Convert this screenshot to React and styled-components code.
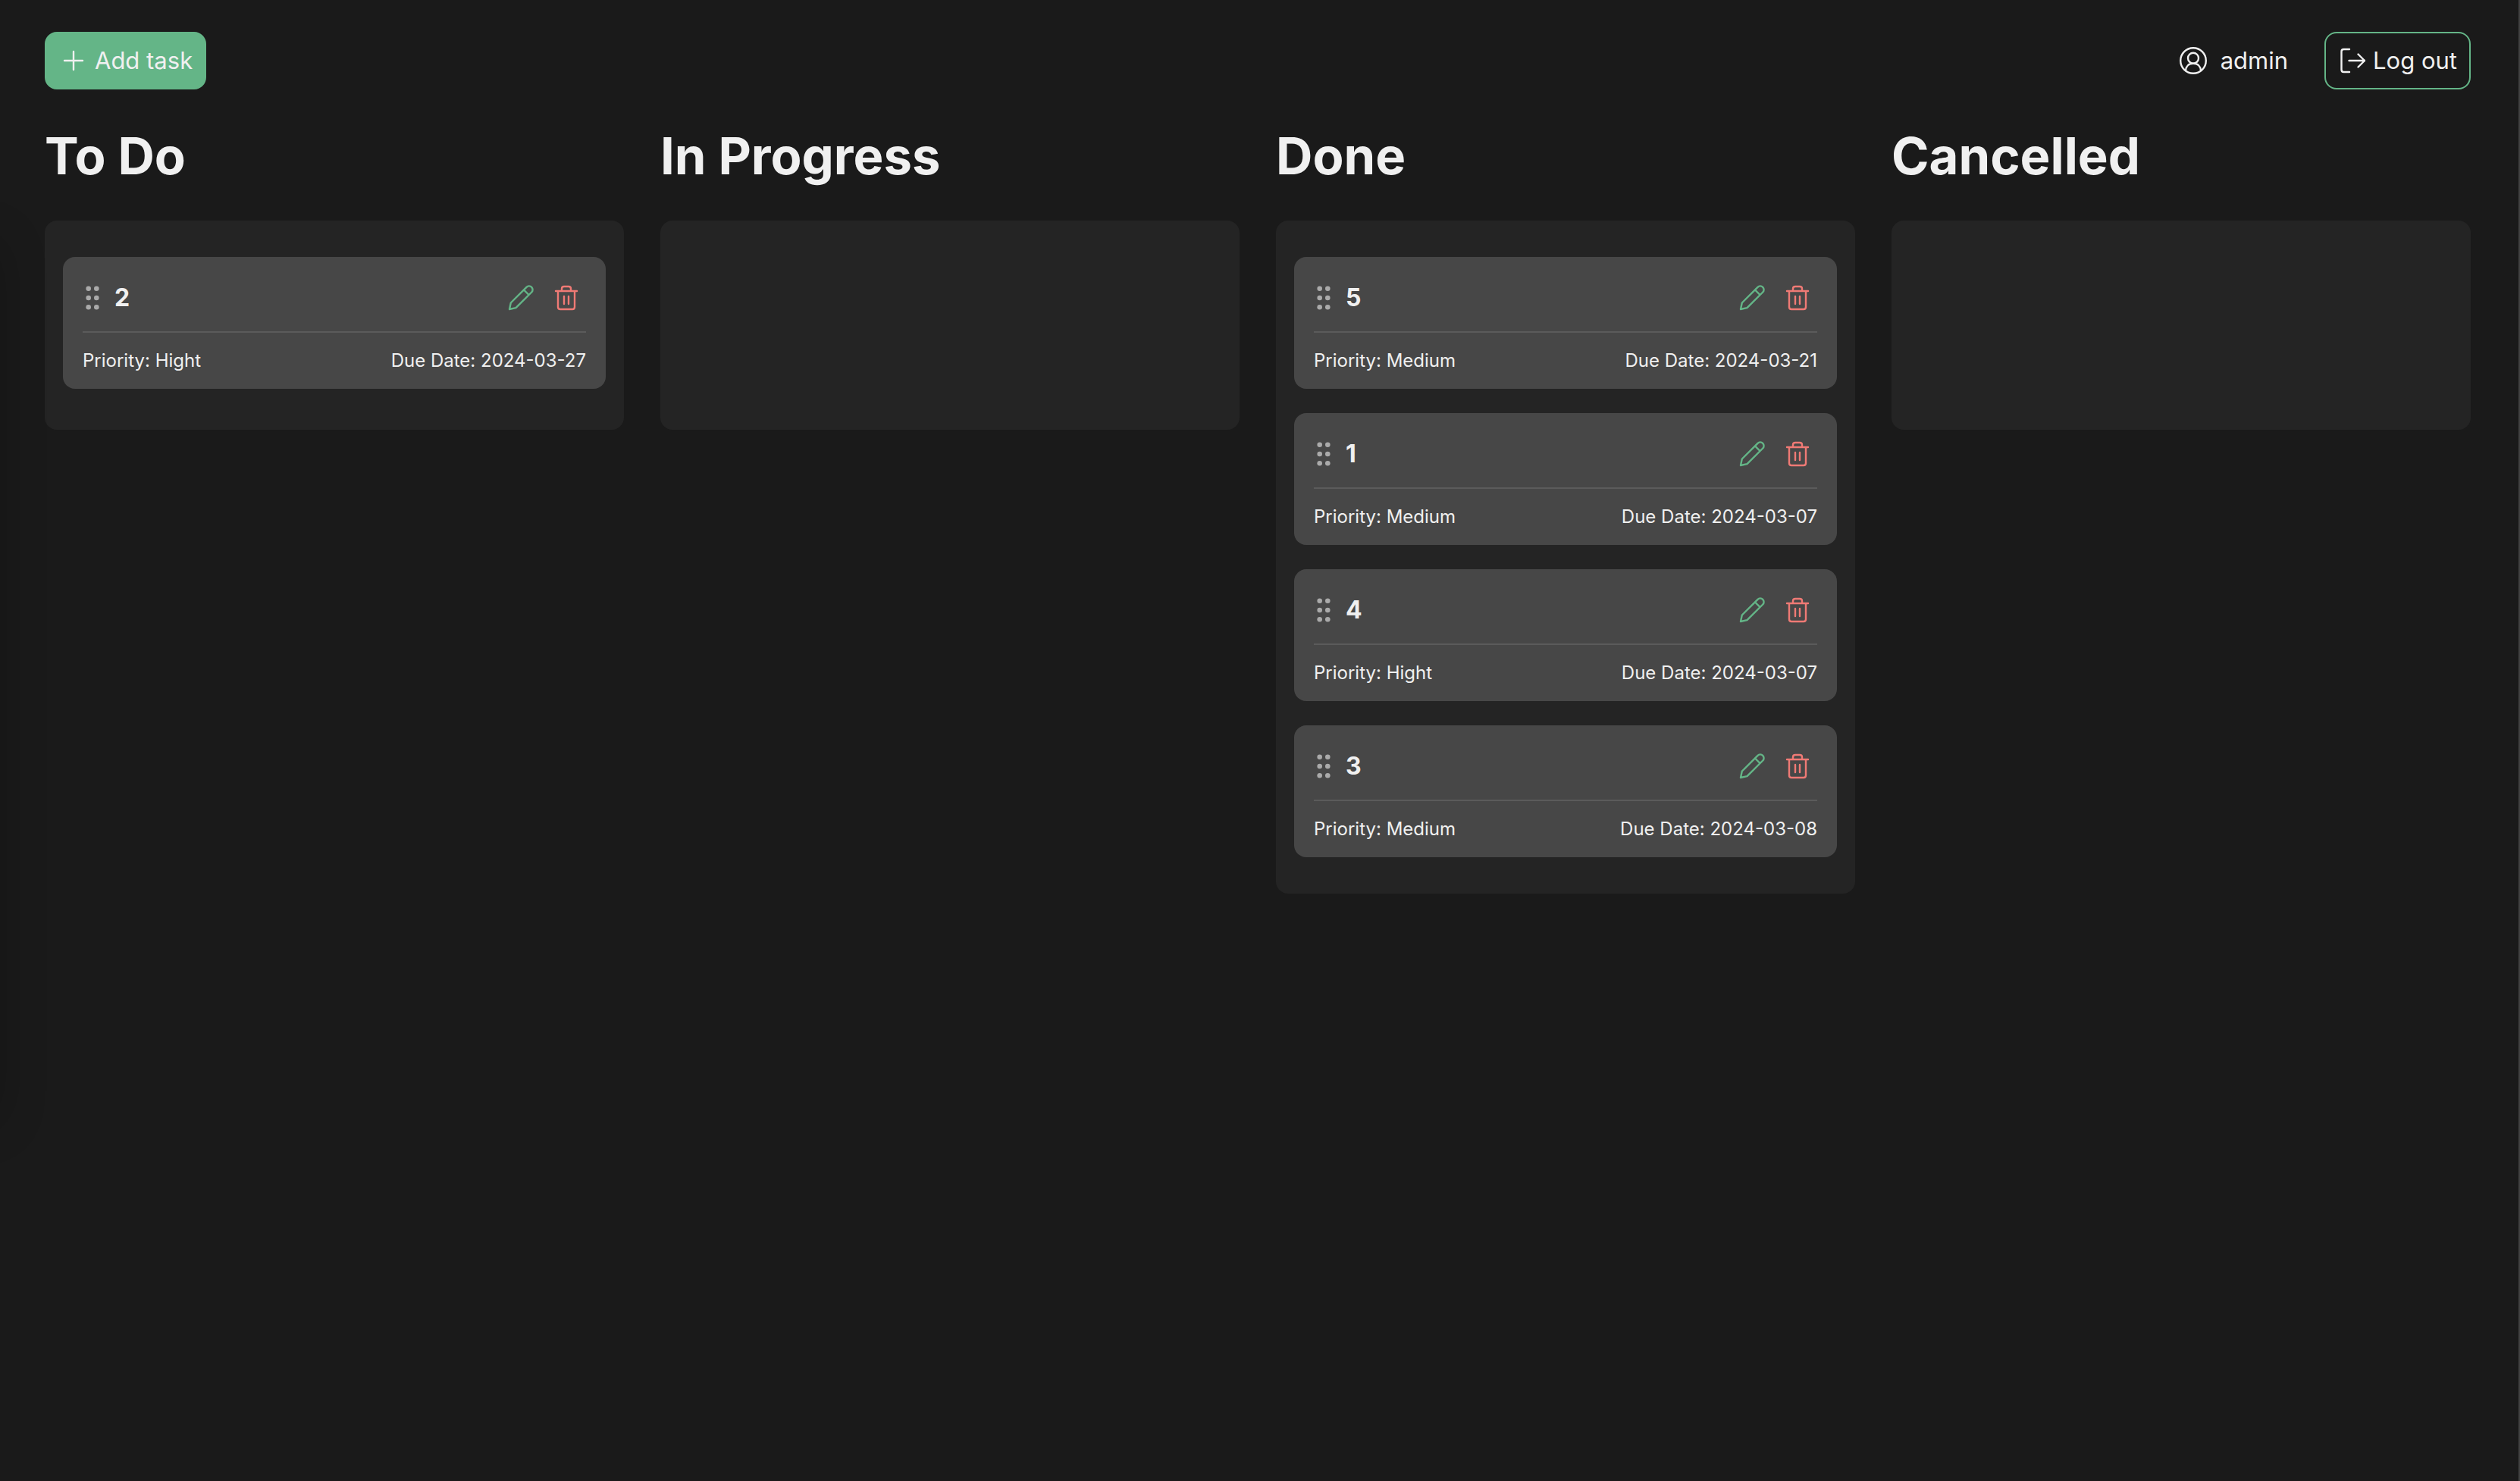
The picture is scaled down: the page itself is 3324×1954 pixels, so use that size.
import React from "react";
import styled, { createGlobalStyle } from "styled-components";

const GlobalStyle = createGlobalStyle`
  *, *::before, *::after { box-sizing: border-box; }
  html { background: #1a1a1a; }
  body {
    margin: 0;
    background: #1a1a1a;
    color: #f0f0f0;
    font-family: Inter, "Liberation Sans", sans-serif;
    font-size: 24px;
  }
`;

const Page = styled.div`
  position: relative;
  overflow: hidden;
  min-height: 100vh;
  padding: 42px 63px 42px 59px;
  border-right: 2px solid #414141;

  &::before {
    content: "";
    position: absolute;
    left: -100px;
    top: 320px;
    width: 100px;
    height: 1160px;
    box-shadow: 0 0 64px rgba(0, 0, 0, 0.2);
  }
`;

const Header = styled.header`
  display: flex;
  align-items: center;
  justify-content: space-between;
`;

const Account = styled.div`
  display: flex;
  align-items: center;
  gap: 48px;
`;

const User = styled.div`
  display: flex;
  align-items: center;
  gap: 16px;
  font-size: 31px;
  line-height: 40px;
`;

const Button = styled.button`
  display: flex;
  align-items: center;
  gap: ${(p) => (p.$primary ? "12px" : "10px")};
  height: 76px;
  padding: 0 16px;
  border: 2px solid #64b587;
  border-radius: 16px;
  background: ${(p) => (p.$primary ? "#64b587" : "transparent")};
  color: inherit;
  font: inherit;
  font-size: 31px;
  line-height: 40px;
  cursor: pointer;
`;

const Board = styled.main`
  display: grid;
  grid-template-columns: repeat(4, minmax(0, 1fr));
  align-items: start;
  gap: 48px;
  margin-top: 46px;
`;

const ColumnTitle = styled.h2`
  margin: 0 0 43px;
  font-size: 67px;
  font-weight: 700;
  line-height: 84px;
`;

const CardList = styled.ul`
  display: flex;
  flex-direction: column;
  gap: 32px;
  min-height: 276px;
  margin: 0;
  padding: 48px 24px;
  border-radius: 16px;
  background: #242424;
  list-style: none;
`;

const Card = styled.li`
  padding: 10px 26px 0;
  border-radius: 16px;
  background: #474747;
`;

const CardHead = styled.div`
  display: flex;
  align-items: center;
  height: 90px;
  padding-right: 8px;
  border-bottom: 2px solid #5b5b5b;
`;

const CardTitle = styled.h3`
  flex: 1;
  margin: 0 0 0 14px;
  font-size: 32px;
  font-weight: 700;
  line-height: 40px;
`;

const IconButton = styled.button`
  display: flex;
  padding: 0;
  margin-left: ${(p) => (p.$spaced ? "24px" : "0")};
  border: 0;
  background: none;
  color: ${(p) => p.$color};
  cursor: pointer;
`;

const CardFoot = styled.div`
  display: flex;
  align-items: center;
  justify-content: space-between;
  height: 74px;
  font-size: 24px;
  line-height: 32px;
`;

const Svg = styled.svg`
  display: block;
  flex: none;
  fill: none;
  stroke: currentColor;
  stroke-width: 2.4;
  stroke-linecap: round;
  stroke-linejoin: round;
`;

const PlusIcon = () => (
  <Svg width="36" height="36" viewBox="0 0 36 36" aria-hidden="true">
    <path d="M20 6v24M8 18h24" />
  </Svg>
);

const UserIcon = () => (
  <Svg width="40" height="40" viewBox="0 0 40 40" aria-hidden="true">
    <circle cx="20" cy="20" r="16.800" />
    <circle cx="20" cy="16.700" r="7" />
    <path d="M10 33c.4-5.600 4-9.300 10-9.300s9.600 3.700 10 9.300" />
  </Svg>
);

const LogoutIcon = () => (
  <Svg width="36" height="36" viewBox="0 0 36 36" aria-hidden="true">
    <path d="M15 3H7.500Q4.500 3 4.500 6v24q0 3 3 3H15M14.500 18h21M26.500 9.500l8.500 8.500-8.500 8.500" />
  </Svg>
);

const GripIcon = () => (
  <Svg width="28" height="36" viewBox="0 0 28 36" aria-hidden="true">
    <g fill="#aaaaaa" stroke="none">
      {[5.7, 18, 30.3].map((y) => (
        <React.Fragment key={y}>
          <circle cx="7.700" cy={y} r="3.300" />
          <circle cx="18.300" cy={y} r="3.300" />
        </React.Fragment>
      ))}
    </g>
  </Svg>
);

const PencilIcon = () => (
  <Svg width="36" height="36" viewBox="0 0 36 36" aria-hidden="true">
    <path d="M3 33l1.800-8.500L25.500 3.800a4.700 4.700 0 0 1 6.700 6.700L11.500 31.200ZM22 7.500l6.500 6.500" />
  </Svg>
);

const TrashIcon = () => (
  <Svg width="36" height="36" viewBox="0 0 36 36" aria-hidden="true">
    <path d="M4 9h28M7 9v21q0 3 3 3h16q3 0 3-3V9M12 9V6q0-3 3-3h6q3 0 3 3v3M15 16v10M21 16v10" />
  </Svg>
);

const columns = [
  { title: "To Do", tasks: [{ name: "2", priority: "Hight", due: "2024-03-27" }] },
  { title: "In Progress", tasks: [] },
  {
    title: "Done",
    tasks: [
      { name: "5", priority: "Medium", due: "2024-03-21" },
      { name: "1", priority: "Medium", due: "2024-03-07" },
      { name: "4", priority: "Hight", due: "2024-03-07" },
      { name: "3", priority: "Medium", due: "2024-03-08" },
    ],
  },
  { title: "Cancelled", tasks: [] },
];

function TaskCard({ task }) {
  return (
    <Card>
      <CardHead>
        <GripIcon />
        <CardTitle>{task.name}</CardTitle>
        <IconButton type="button" $color="#64b587" aria-label="Edit task">
          <PencilIcon />
        </IconButton>
        <IconButton type="button" $color="#ef7a75" $spaced aria-label="Delete task">
          <TrashIcon />
        </IconButton>
      </CardHead>
      <CardFoot>
        <span>Priority: {task.priority}</span>
        <span>Due Date: {task.due}</span>
      </CardFoot>
    </Card>
  );
}

export default function App() {
  return (
    <>
      <GlobalStyle />
      <Page>
        <Header>
          <Button type="button" $primary>
            <PlusIcon />
            <span>Add task</span>
          </Button>
          <Account>
            <User>
              <UserIcon />
              <span>admin</span>
            </User>
            <Button type="button">
              <LogoutIcon />
              <span>Log out</span>
            </Button>
          </Account>
        </Header>
        <Board>
          {columns.map((column) => (
            <section key={column.title}>
              <ColumnTitle>{column.title}</ColumnTitle>
              <CardList>
                {column.tasks.map((task) => (
                  <TaskCard key={task.name} task={task} />
                ))}
              </CardList>
            </section>
          ))}
        </Board>
      </Page>
    </>
  );
}
